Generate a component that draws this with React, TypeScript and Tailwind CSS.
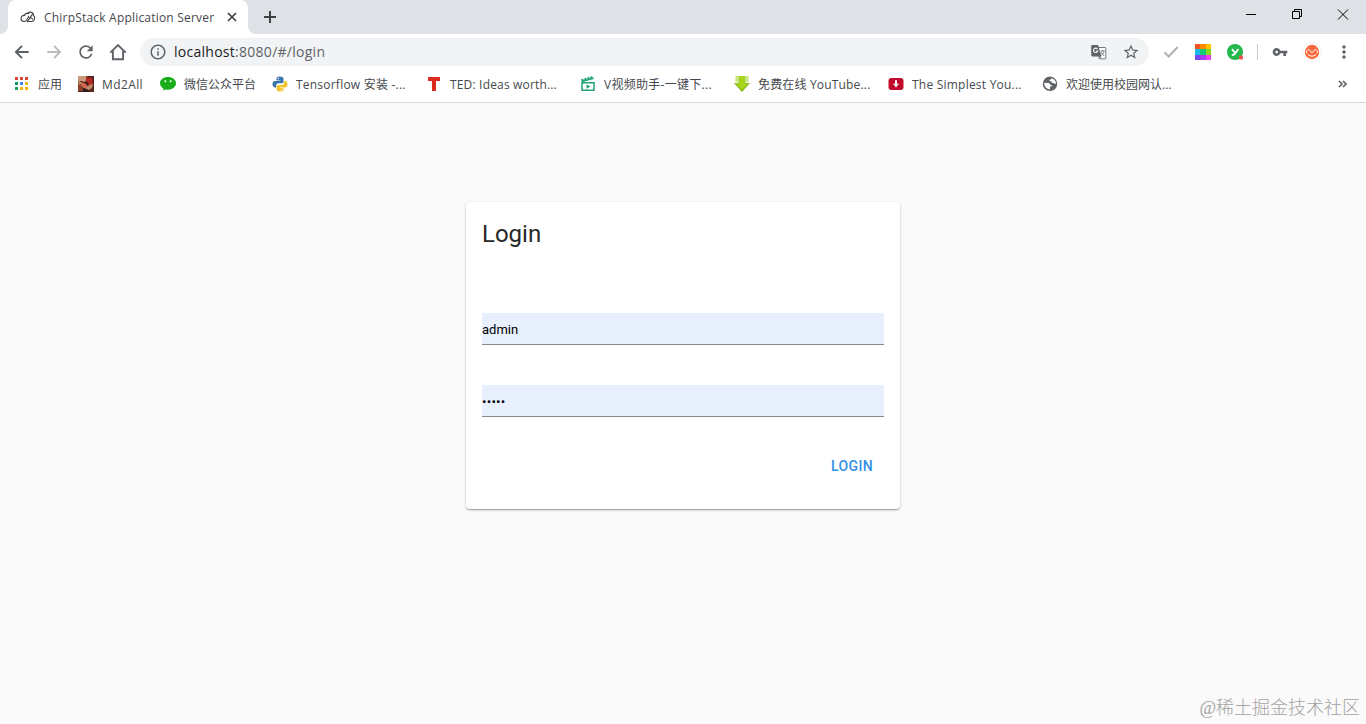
import React from 'react';
import { MdRefresh, MdInfoOutline, MdStar, MdStarBorder, MdVpnKey, MdMoreVert } from 'react-icons/md';

const CloudIcon = () => (
  <svg width="16" height="16" viewBox="0 0 16 16" fill="none" stroke="#3c4043" strokeWidth="1.1" strokeLinecap="round">
    <path d="M8.700 4.700C7.900 3.900 5.300 4 4.600 6.400 2.400 6.200 1 7.700 1 9.600c0 1.800 1.300 2.900 3 2.900 2.600 0 3.400-2.500 4.700-5.300" />
    <path d="M7.500 4.500C8.700 2.500 13 2.300 13.600 6.300c2 2.200 1 6-1.700 6.200H7.300l4.900-6.900" />
    <path d="M9.800 9.300c.9-.7 2.500-.4 2.700 1" />
  </svg>
);

const BackIcon = () => (
  <svg width="20" height="20" viewBox="0 0 20 20" fill="none" stroke="#5f6368" strokeWidth="2">
    <path d="M16.700 10H4.500M10 3.900 3.900 10l6.100 6.100" />
  </svg>
);

const ForwardIcon = () => (
  <svg width="20" height="20" viewBox="0 0 20 20" fill="none" stroke="#babcbe" strokeWidth="1.900">
    <path d="M3.300 10h12.200M10 3.900l6.100 6.100-6.100 6.100" />
  </svg>
);

const HomeIcon = () => (
  <svg width="20" height="20" viewBox="0 0 20 20" fill="none" stroke="#5f6368" strokeWidth="1.9">
    <path d="M2.300 10.600 10 3l7.700 7.600M4.900 9v8.300h10.200V9" />
  </svg>
);

const CloseIcon = () => (
  <svg width="14" height="14" viewBox="0 0 14 14" fill="none" stroke="#3c4043" strokeWidth="1.700" className="ml-[11px] shrink-0">
    <path d="m3 3 8 8M11 3l-8 8" />
  </svg>
);

const PlusIcon = () => (
  <svg width="18" height="18" viewBox="0 0 18 18" fill="none" stroke="#3c4043" strokeWidth="2" className="ml-[5px] mt-2">
    <path d="M9 3v12M3 9h12" />
  </svg>
);

const CheckIcon = () => (
  <svg width="20" height="20" viewBox="0 0 20 20" fill="none" stroke="#b0b2b4" strokeWidth="2" className="ml-3">
    <path d="m3.500 10.300 4.200 4.200 9-9.500" />
  </svg>
);

const TranslateIcon = () => (
  <svg width="16" height="16" viewBox="0 0 16 16" className="ml-auto">
    <path fill="#fff" stroke="#74787c" d="M6.500 3.500H14a.8.8 0 0 1 .8.8V14a.8.8 0 0 1-.8.8H8.500z" />
    <path fill="#5f6368" d="M1.500 1h5.600l3.300 11.500H1.500A1.300 1.300 0 0 1 .2 11.200V2.300C.2 1.600.8 1 1.500 1z" />
    <path fill="none" stroke="#f1f3f4" strokeWidth="1.100" d="M6.500 5.100A2.200 2.200 0 1 0 6.800 7H4.900" />
    <path fill="none" stroke="#74787c" d="M9.600 7h4M11.500 6v1M10 8c.6 1.500 1.700 2.700 3.300 3.600M13 7.300c-.4 1.700-1.200 3-2.600 4" />
    <path fill="#5f6368" d="m7.800 12.500 2.600 0-2 2.300z" />
  </svg>
);

const AppsIcon = () => (
  <svg width="16" height="16" viewBox="0 0 16 16">
    <path fill="#db4437" d="M1 1h3v3H1zM6 1h3v3H6zM11 1h3v3h-3z" />
    <path fill="#0f9d58" d="M1 6h3v3H1zM1 11h3v3H1z" />
    <path fill="#4285f4" d="M6 6h3v3H6z" />
    <path fill="#f4b400" d="M11 6h3v3h-3zM6 11h3v3H6zM11 11h3v3h-3z" />
  </svg>
);

const PhotoIcon = () => (
  <svg width="16" height="16" viewBox="0 0 16 16">
    <path fill="#54261d" d="M0 0h16v16H0z" />
    <path fill="#c9997b" d="M0 0h8l2 3-3 3-4-1-3 1z" />
    <path fill="#b42a23" d="m8 1 6 1 1 7-4 1-3-4z" />
    <path fill="#cf6952" d="m3 6 5 2 3 4-3 2-5-4z" />
    <path fill="#8b3e29" d="m0 6 4 5 2 4H0z" />
    <path fill="#bb8868" d="m11 9 4-1-1 4-3 2-4-1zM0 5l3 1 1 2-3 1z" />
    <path fill="#301a17" d="m5 12 4 1 2 3H5zM7 5l2 1 2 3-3-1z" />
  </svg>
);

const WechatIcon = () => (
  <svg width="16" height="16" viewBox="0 0 16 16">
    <path fill="#1aad19" d="M8 1c4.500 0 8 2.700 8 6.300S12.500 13.700 8 13.700c-.8 0-1.700-.1-2.500-.3L3 14.800l.5-2.300C1.400 11.400 0 9.500 0 7.300 0 3.700 3.500 1 8 1z" />
    <circle cx="5.300" cy="5.200" r="1" fill="#fff" />
    <circle cx="10.700" cy="5.200" r="1" fill="#fff" />
  </svg>
);

const PythonIcon = () => (
  <svg width="16" height="16" viewBox="0 0 16 16">
    <path fill="#3b75a8" d="M7.500.5C5 .5 4.500 1.500 4.500 2.800v1.700h3.700V5H3C1.200 5 .5 6.500.5 8s.7 3.400 2.300 3.400h1.400V9.500c0-1.200 1-2.200 2.200-2.200h3.300c1 0 1.800-.9 1.800-1.900V2.800C11.500 1.200 9.800.5 7.500.5z" />
    <path fill="#f2c52c" d="M8.500 15.500c2.500 0 3-1 3-2.300V12H7.800v-.5H13c1.800 0 2.500-1.500 2.500-3.100S14.700 5 13.200 5H12v1.900c0 1.200-1 2.200-2.200 2.200H6.500c-1 0-1.900.9-1.900 1.900v2.400c0 1.500 1.800 2.100 3.900 2.100z" />
    <circle cx="6.300" cy="2.500" r=".7" fill="#fff" />
    <circle cx="9.700" cy="13.600" r=".7" fill="#fff" />
  </svg>
);

const TedIcon = () => (
  <svg width="16" height="16" viewBox="0 0 16 16">
    <path fill="#db2b1f" d="M2 1h12v4h-4v10H6V5H2z" />
  </svg>
);

const ClapperIcon = () => (
  <svg width="16" height="16" viewBox="0 0 16 16" fill="none" stroke="#20a378" strokeWidth="1.500">
    <path d="M2 6.800h12v7.500H2zM1.800 5.500l11.800-3.200" />
    <path strokeWidth="2.400" strokeDasharray="2.300 .8" d="m1.400 4.400 11.800-3.200" />
    <path fill="#20a378" stroke="none" d="m6.500 8.500 4 2-4 2.200z" />
  </svg>
);

const GreenArrowIcon = () => (
  <svg width="16" height="16" viewBox="0 0 16 16">
    <path fill="#c3e36a" d="M1.500 0h2.200v6H1.500zM12.300 0h2.200v6h-2.200z" />
    <path fill="#7eb817" d="M4.500 0h7v7H16l-8 9-8-9h4.500z" />
    <path fill="#a8d51c" d="M5 0h6v7.500h3.200L8 14 1.800 7.500H5z" />
  </svg>
);

const DownloaderIcon = () => (
  <svg width="16" height="16" viewBox="0 0 16 16">
    <rect x=".5" y="2" width="15" height="12" rx="3" fill="#c20b2d" />
    <path fill="#fff" d="M7 4.300h2v3.500h2L8 11.500 5 7.800h2z" />
  </svg>
);

const GlobeIcon = () => (
  <svg width="16" height="16" viewBox="0 0 16 16">
    <circle cx="8" cy="7.800" r="7.200" fill="#5f6368" />
    <path fill="#fff" d="M9.200 2.200c2.600.4 4.600 2.400 4.900 5-.9.900-2.200.6-2.600-.3-1.300.1-2.300-.6-2.100-1.700H7.600V3.600h1.600zM2.300 6.800l4.200.2c1 .1 1.500.8 1.500 1.700h1.700v1.800H8v2.900c-3.300 0-5.900-2.900-5.700-6.600z" />
  </svg>
);

const ExtensionGrid = () => (
  <svg width="16" height="16" viewBox="0 0 16 16" shapeRendering="crispEdges">
    <path fill="#f4511e" d="M0 0h5v5H0z" />
    <path fill="#ff8a00" d="M5 0h6v5H5z" />
    <path fill="#ffc400" d="M11 0h5v5h-5z" />
    <path fill="#16b9ea" d="M0 5h5v6H0z" />
    <path fill="#15cb72" d="M5 5h6v6H5z" />
    <path fill="#86dc1c" d="M11 5h5v6h-5z" />
    <path fill="#7448f5" d="M0 11h5v5H0z" />
    <path fill="#a83cf6" d="M5 11h6v5H5z" />
    <path fill="#f23df0" d="M11 11h5v5h-5z" />
  </svg>
);

const GreenBadge = () => (
  <svg width="16" height="16" viewBox="0 0 16 16">
    <circle cx="8" cy="8" r="8" fill="#22b84b" />
    <path d="m5 5.200 2.700 3.200M11.400 5 8.300 9.300Q7.200 11.200 4.800 11" fill="none" stroke="#fff" strokeWidth="1.900" />
    <rect x="12" y="11.500" width="4" height="4" rx="1" fill="#ef5350" />
  </svg>
);

const Avatar = () => (
  <svg width="20" height="20" viewBox="0 0 20 20">
    <circle cx="10" cy="10" r="9.500" fill="#fff" stroke="#eceef0" />
    <circle cx="10" cy="10" r="7.200" fill="#fb6a3c" />
    <path d="M4.500 11.200c.2-4 2.100-4.700 3.500-2.300l2 1.900 2-1.900c1.400-2.400 3.300-1.700 3.500 2.300M5.800 12.500q4.200 3.400 8.400 0" fill="none" stroke="#fff" strokeWidth="1" />
  </svg>
);

const BOOKMARKS = [
  { label: '应用', icon: <AppsIcon />, width: 'w-16', text: '' },
  { label: 'Md2All', icon: <PhotoIcon />, width: 'w-[82px]', text: 'tracking-[0.4px]' },
  { label: '微信公众平台', icon: <WechatIcon />, width: 'w-28', text: '' },
  { label: 'Tensorflow 安装 -...', icon: <PythonIcon />, width: 'w-[154px]', text: 'tracking-[0.22px]' },
  { label: 'TED: Ideas worth...', icon: <TedIcon />, width: 'w-[154px]', text: 'tracking-[0.17px]' },
  { label: 'V视频助手-一键下...', icon: <ClapperIcon />, width: 'w-[154px]', text: 'tracking-[0.28px]' },
  { label: '免费在线 YouTube...', icon: <GreenArrowIcon />, width: 'w-[154px]', text: 'tracking-[0.17px]' },
  { label: 'The Simplest You...', icon: <DownloaderIcon />, width: 'w-[154px]', text: 'tracking-[0.22px]' },
  { label: '欢迎使用校园网认...', icon: <GlobeIcon />, width: 'w-[154px]', text: '' },
];

const TabStrip = () => (
  <div className="flex h-[34px] justify-between bg-[#dee1e6]">
    <div className="flex">
      <div className="flex w-2 items-end bg-white">
        <div className="h-full w-2 rounded-br-lg bg-[#dee1e6]" />
      </div>
      <div className="bg-[#dee1e6]">
        <div className="flex h-[34px] w-60 items-center rounded-t-lg bg-white pl-3 pr-2">
          <CloudIcon />
          <span className="ml-2 w-[170px] whitespace-nowrap pt-0.5 text-[12px] tracking-[0.2px] text-[#45494d]">ChirpStack Application Server</span>
          <CloseIcon />
        </div>
      </div>
      <div className="w-2 bg-white">
        <div className="h-full rounded-bl-lg bg-[#dee1e6]" />
      </div>
      <PlusIcon />
    </div>
    <div className="flex text-black">
      <svg width="138" height="29" viewBox="0 0 138 29" fill="none" stroke="currentColor">
        <path d="M18 14.500h10M64.500 11.500h7v7h-7zM66.500 11.500v-2h7v7h-2M110 9.500l10 10M120 9.500l-10 10" />
      </svg>
    </div>
  </div>
);

const Toolbar = () => (
  <div className="flex h-9 items-center pr-3 text-[#5f6368]">
    <div className="flex items-center gap-3 pl-3">
      <BackIcon />
      <ForwardIcon />
      <MdRefresh size={20} />
      <HomeIcon />
    </div>
    <div className="ml-3 flex h-7 w-[1009px] items-center rounded-full bg-[#f1f3f4] pl-[9px] pr-[9px]">
      <MdInfoOutline size={18} />
      <span className="ml-[7px] text-[14px] leading-5 tracking-[0.27px]"><span className="text-[#202124]">localhost</span>:8080/#/login</span>
      <TranslateIcon />
      <MdStarBorder size={18} className="ml-[15px]" />
    </div>
    <CheckIcon />
    <div className="ml-3.5 flex items-center gap-4">
      <ExtensionGrid />
      <GreenBadge />
    </div>
    <div className="ml-3.5 h-4 w-px bg-[#c9cccf]" />
    <MdVpnKey size={16} className="ml-3.5 mr-3.5" />
    <Avatar />
    <MdMoreVert size={20} className="ml-3" />
  </div>
);

const BookmarksBar = () => (
  <div className="flex h-[33px] items-start border-b border-[#d5d6d8] pl-3.5 pt-1.5 text-[#45494d]">
    {BOOKMARKS.map(item => (
      <div key={item.label} className={`flex h-4 shrink-0 items-center ${item.width}`}>
        <span className="mr-2 flex w-4 shrink-0 justify-center">{item.icon}</span>
        <span className={`whitespace-nowrap pt-0.5 text-[12px] leading-4 ${item.text}`}>{item.label}</span>
      </div>
    ))}
    <svg width="10" height="16" viewBox="0 0 10 16" fill="none" stroke="#5f6368" strokeWidth="1.700" className="ml-auto mr-[18px]">
      <path d="m1 5 3 3-3 3M5 5l3 3-3 3" />
    </svg>
  </div>
);

const LoginCard = () => (
  <div className="h-[307px] w-[434px] rounded bg-white px-4 pt-4 font-[Roboto,sans-serif] shadow-[0_1px_3px_rgba(0,0,0,0.2),0_1px_1px_rgba(0,0,0,0.14),0_2px_1px_-1px_rgba(0,0,0,0.12)]">
    <h1 className="text-2xl leading-8 text-[#272727]">Login</h1>
    <div className="mt-[63px] flex h-8 items-center border-b border-[#85888f] bg-[#e8f0fe] pt-0.5 text-[13px] text-black">admin</div>
    <div className="mt-10 flex h-8 items-center border-b border-[#85888f] bg-[#e8f0fe] pt-0.5 text-[13.33px] tracking-[0.2px] text-black">•••••</div>
    <div className="mt-[31px] flex justify-end">
      <button className="h-9 w-16 text-sm font-medium tracking-[0.4px] text-[#3390e8]">LOGIN</button>
    </div>
  </div>
);

const App: React.FC = () => {
  return (
    <div className="flex h-[724px] w-[1366px] flex-col overflow-hidden bg-white font-['Open_Sans','Noto_Sans_CJK_SC',sans-serif]">
      <TabStrip />
      <Toolbar />
      <BookmarksBar />
      <main className="flex flex-1 flex-col items-center bg-[#fafafa] pt-[99px]">
        <LoginCard />
        <div className="mr-1.5 mt-auto whitespace-nowrap self-end pb-1 font-['Liberation_Serif','Noto_Sans_CJK_SC',serif] text-[18px] font-light leading-6 text-[#a3a3a3]">@稀土掘金技术社区</div>
      </main>
    </div>
  );
};

export default App;
